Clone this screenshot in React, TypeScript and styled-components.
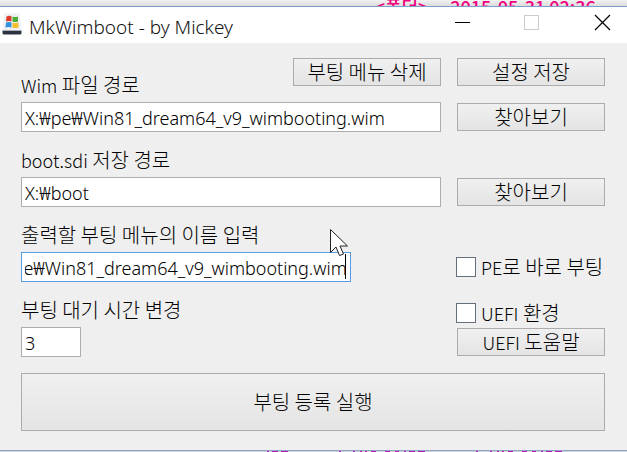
import React, { useLayoutEffect, useRef, useState } from "react";
import styled, { createGlobalStyle } from "styled-components";

const GlobalStyle = createGlobalStyle`
  *, *::before, *::after { box-sizing: border-box; }
  body {
    margin: 0;
    background: #efefef;
    color: #000;
    font-family: "Noto Sans CJK KR", "Noto Sans", sans-serif;
    font-weight: 300;
    overflow: hidden;
  }
  button, input { font: inherit; color: inherit; }
`;

const Desktop = styled.div`
  display: flex;
  flex-direction: column;
`;

const BackdropTop = styled.div`
  display: flex;
  justify-content: flex-end;
  gap: 22px;
  height: 6px;
  padding-right: 8px;
  overflow: hidden;
  background: linear-gradient(#f2f2f2, #dcdcdc);
  color: #f0007f;
  font-family: "Noto Sans CJK KR", sans-serif;
  font-size: 18px;
  line-height: 12px;
  font-weight: 500;
  white-space: nowrap;
`;

const BackdropBottom = styled.svg`
  display: block;
  width: 100%;
  height: 1px;
  background: #d4d4d8;
`;

const Window = styled.main`
  border-top: 1px solid #7f9fcb;
  border-bottom: 1px solid #8fa4c4;
  background: #efefef;
`;

const TitleBar = styled.header`
  display: flex;
  align-items: center;
  height: 36px;
  padding: 0 15px 0 2px;
  background: #fff;
`;

const Title = styled.h1`
  flex: 1;
  margin: 0 0 0 7px;
  padding-top: 3px;
  font-size: 19px;
  line-height: 28px;
  font-family: "Noto Sans", "Noto Sans CJK KR", sans-serif;
  font-weight: 300;
  color: #111;
  white-space: nowrap;
`;

const Controls = styled.div`
  display: flex;
  gap: 50px;
  padding-bottom: 6px;
`;

const WindowButton = styled.button`
  display: flex;
  width: 20px;
  height: 20px;
  padding: 0;
  border: 0;
  background: none;
`;

const Form = styled.form`
  padding: 15px 22px 19px 21px;
`;

const Grid = styled.div`
  display: grid;
  grid-template-columns: minmax(0, 1fr) 148px;
  column-gap: 16px;
`;

const CaptionRow = styled.div`
  display: flex;
  align-items: flex-end;
  justify-content: space-between;
  height: 45px;
  padding-bottom: 4px;
`;

const HeadRow = styled.div`
  display: flex;
  align-items: flex-start;
  justify-content: space-between;
  height: 44px;
`;

const Caption = styled.label<{ $lowered?: boolean }>`
  font-size: 20px;
  line-height: 26px;
  white-space: nowrap;
  padding-top: ${(p) => (p.$lowered ? "14px" : "0")};
  box-sizing: content-box;
`;

const Latin = styled.span`
  font-size: 18px;
  line-height: 20px;
`;

const FieldRow = styled.div`
  display: flex;
  align-items: center;
  height: 30px;
`;

const FieldBox = styled.div<{ $width: string }>`
  position: relative;
  width: ${(p) => p.$width};
  height: 30px;
`;

const TextField = styled.input<{ $active?: boolean }>`
  display: block;
  width: 100%;
  height: 30px;
  padding: 2px 3px 0;
  border: 1px solid ${(p) => (p.$active ? "#569de5" : "#abadb3")};
  border-radius: 0;
  outline: none;
  background: #fff;
  font-family: "Noto Sans", "Noto Sans CJK KR", sans-serif;
  font-size: 18px;
`;

const Caret = styled.span`
  position: absolute;
  top: 2px;
  right: 5px;
  width: 1px;
  height: 25px;
  background: #000;
`;

const Pointer = styled.svg`
  position: absolute;
  top: -24px;
  right: 2px;
  pointer-events: none;
`;

const PushButton = styled.button<{ $large?: boolean }>`
  width: ${(p) => (p.$large ? "100%" : "148px")};
  height: ${(p) => (p.$large ? "58px" : "28px")};
  margin-top: ${(p) => (p.$large ? "16px" : "0")};
  padding: 0;
  border: 1px solid #acacac;
  border-radius: 0;
  background: linear-gradient(#f0f0f0, #e4e4e4);
  font-size: 20px;
  line-height: 26px;
  white-space: nowrap;
`;

const CheckLabel = styled.label`
  display: flex;
  align-items: center;
  gap: 5px;
  height: 20px;
  margin-left: -1px;
  font-size: 20px;
  line-height: 26px;
  white-space: nowrap;
`;

const CheckBox = styled.input`
  appearance: none;
  flex: none;
  width: 20px;
  height: 20px;
  margin: 0;
  border: 1px solid #66707c;
  background: #fff;
  &:checked { background: #66707c; box-shadow: inset 0 0 0 4px #fff; }
`;

function AppIcon() {
  return (
    <svg width="20" height="24" viewBox="0 0 20 24" aria-hidden="true">
      <path d="M2.5 0.5H17.500L19.500 18H0.500Z" fill="#eef0f3" />
      <path d="M0.500 17.500H19.500V20Q19.500 21.500 18 21.500H2Q0.500 21.500 0.500 20Z" fill="#2b3340" />
      <path d="M1 17.500H19" stroke="#a9b0ba" />
      <path d="M4.500 3.500Q7 2 9.500 3.500V8.500Q7 7.500 4 8.500Z" fill="#dd3b2b" />
      <path d="M10.500 3.500Q13 4.500 16 3.500V8.500Q13 9.500 10.500 8.500Z" fill="#4cae36" />
      <path d="M4 9.500Q7 8.500 9.500 9.500V14.500Q6.500 13.500 3.500 14.500Z" fill="#2f93e0" />
      <path d="M10.500 9.500Q13 10.500 16.500 9.500V14.500Q13 15.500 10.500 14.500Z" fill="#f6bd2b" />
    </svg>
  );
}

const FILE = "X:₩pe₩Win81_dream64_v9_wimbooting.wim";

export default function App() {
  const [wim, setWim] = useState(FILE);
  const [sdi, setSdi] = useState("X:₩boot");
  const [name, setName] = useState(FILE);
  const [wait, setWait] = useState("3");
  const nameRef = useRef<HTMLInputElement>(null);

  useLayoutEffect(() => {
    const field = nameRef.current;
    if (field) field.scrollLeft = field.scrollWidth;
  }, [name]);

  return (
    <Desktop>
      <GlobalStyle />
      <BackdropTop aria-hidden="true">
        <span>&lt;폴더&gt;</span>
        <span>2015-05-31 02:36 ---</span>
      </BackdropTop>
      <Window>
        <TitleBar>
          <AppIcon />
          <Title>MkWimboot - by Mickey</Title>
          <Controls>
            <WindowButton type="button" aria-label="최소화">
              <svg width="20" height="20"><path d="M3 10.5H18" stroke="#000" /></svg>
            </WindowButton>
            <WindowButton type="button" aria-label="최대화" disabled>
              <svg width="20" height="20"><rect x="2.5" y="3.5" width="14" height="14" fill="none" stroke="#ccc" /></svg>
            </WindowButton>
            <WindowButton type="button" aria-label="닫기">
              <svg width="20" height="20"><path d="M3 3L18 18M18 3L3 18" stroke="#000" strokeWidth="1.2" /></svg>
            </WindowButton>
          </Controls>
        </TitleBar>
        <Form onSubmit={(e) => e.preventDefault()}>
          <Grid>
            <HeadRow>
              <Caption htmlFor="wim" $lowered><Latin>Wim</Latin> 파일 경로</Caption>
              <PushButton type="button">부팅 메뉴 삭제</PushButton>
            </HeadRow>
            <HeadRow>
              <PushButton type="button">설정 저장</PushButton>
            </HeadRow>
            <FieldRow>
              <FieldBox $width="100%">
                <TextField id="wim" value={wim} onChange={(e) => setWim(e.target.value)} />
              </FieldBox>
            </FieldRow>
            <FieldRow><PushButton type="button">찾아보기</PushButton></FieldRow>

            <CaptionRow><Caption htmlFor="sdi"><Latin>boot.sdi</Latin> 저장 경로</Caption></CaptionRow>
            <CaptionRow />
            <FieldRow>
              <FieldBox $width="100%">
                <TextField id="sdi" value={sdi} onChange={(e) => setSdi(e.target.value)} />
              </FieldBox>
            </FieldRow>
            <FieldRow><PushButton type="button">찾아보기</PushButton></FieldRow>

            <CaptionRow><Caption htmlFor="name">출력할 부팅 메뉴의 이름 입력</Caption></CaptionRow>
            <CaptionRow />
            <FieldRow>
              <FieldBox $width="330px">
                <TextField id="name" ref={nameRef} $active value={name} onChange={(e) => setName(e.target.value)} />
                <Caret />
                <Pointer width="20" height="30" viewBox="0 0 20 30" aria-hidden="true">
                  <path d="M1.5 1.5V24.5L7 19L10.5 27.5L14.5 26L11 18H18.5Z" fill="#fff" stroke="#222" />
                </Pointer>
              </FieldBox>
            </FieldRow>
            <FieldRow>
              <CheckLabel>
                <CheckBox type="checkbox" />
                <span><Latin>PE</Latin>로 바로 부팅</span>
              </CheckLabel>
            </FieldRow>

            <CaptionRow><Caption htmlFor="wait">부팅 대기 시간 변경</Caption></CaptionRow>
            <CaptionRow>
              <CheckLabel>
                <CheckBox type="checkbox" />
                <span><Latin>UEFI</Latin> 환경</span>
              </CheckLabel>
            </CaptionRow>
            <FieldRow>
              <FieldBox $width="60px">
                <TextField id="wait" value={wait} onChange={(e) => setWait(e.target.value)} />
              </FieldBox>
            </FieldRow>
            <FieldRow><PushButton type="button"><Latin>UEFI</Latin> 도움말</PushButton></FieldRow>
          </Grid>
          <PushButton type="submit" $large>부팅 등록 실행</PushButton>
        </Form>
      </Window>
      <BackdropBottom aria-hidden="true">
        <path
          d="M267 .5H605"
          stroke="#b416ba"
          strokeDasharray="2 3 6 3 7 51 2 12 2 5 2 3 2 4 5 9 5 5 4 5"
        />
      </BackdropBottom>
    </Desktop>
  );
}
